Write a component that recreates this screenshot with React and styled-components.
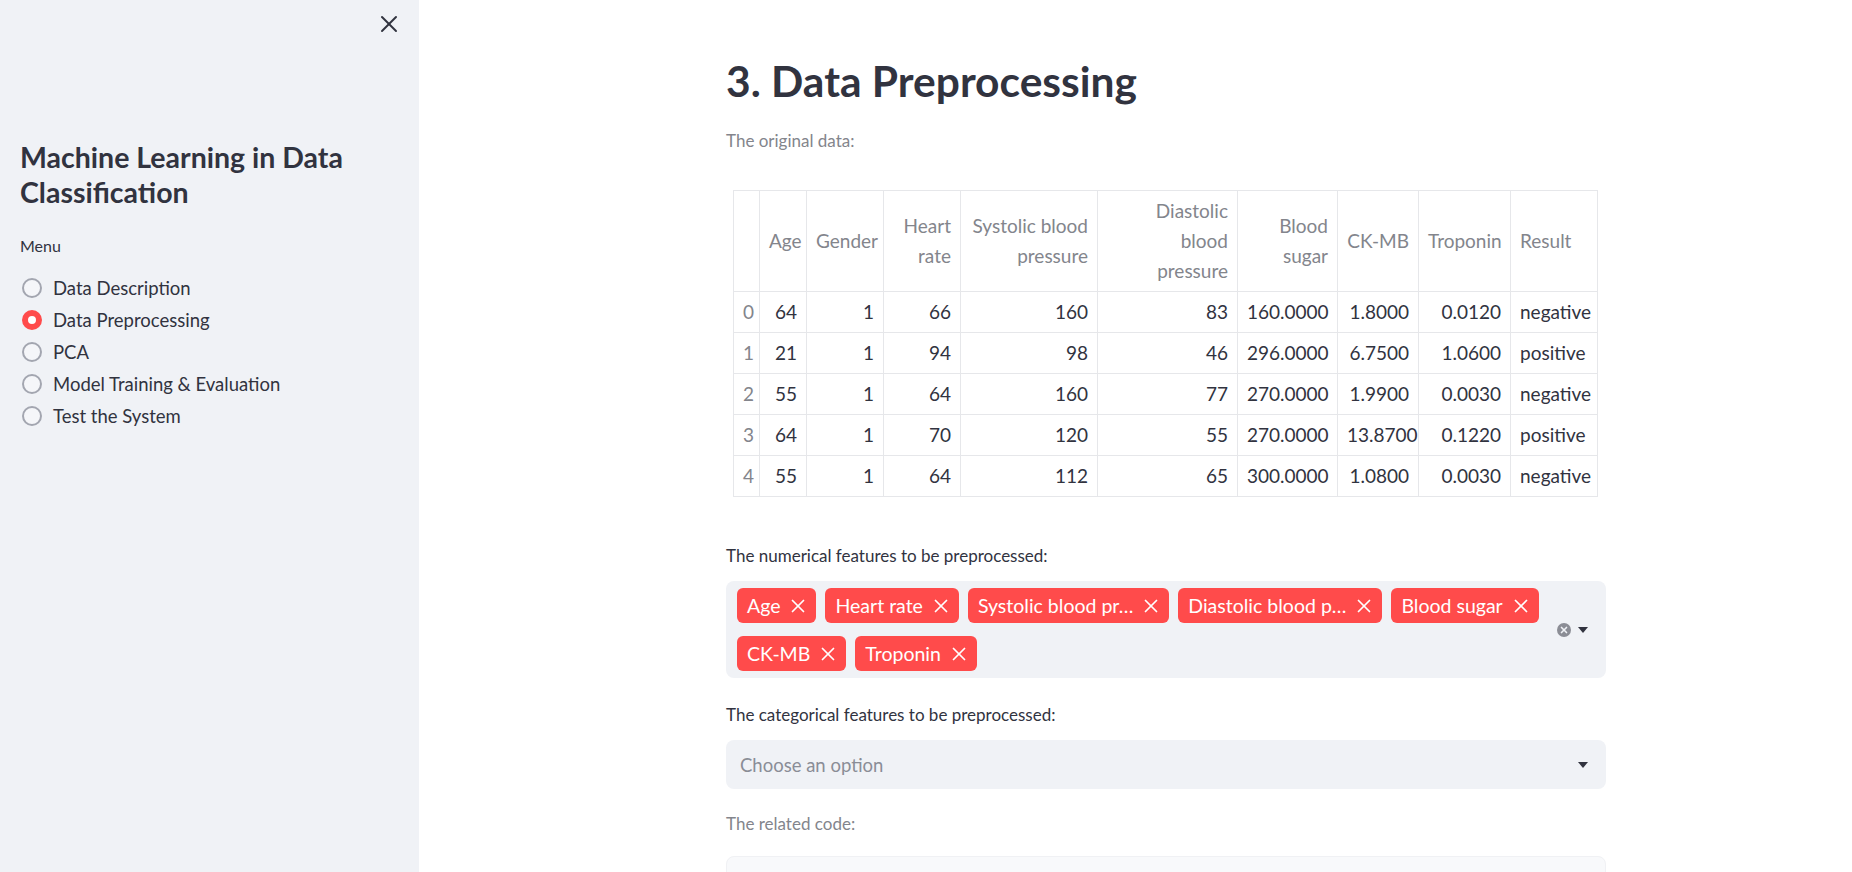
import React from "react";
import styled, { createGlobalStyle } from "styled-components";
import { X } from "lucide-react";

const GlobalStyle = createGlobalStyle`
  html, body {
    margin: 0;
    padding: 0;
    background: #ffffff;
  }
  body {
    font-family: "Lato", "Liberation Sans", sans-serif;
    color: #31333f;
  }
`;

const Page = styled.div`
  display: flex;
  height: 872px;
  overflow: hidden;
`;

const Sidebar = styled.aside`
  width: 419px;
  flex-shrink: 0;
  background: #f0f2f6;
  box-sizing: border-box;
  padding: 0 20px;
`;

const SidebarHeader = styled.div`
  display: flex;
  justify-content: flex-end;
  padding-top: 10px;
  margin-right: -4px;
  height: 130px;
  box-sizing: border-box;
  color: #31333f;
`;

const SidebarTitle = styled.h2`
  margin: 0;
  font-size: 28.5px;
  line-height: 35px;
  font-weight: 700;
  color: #31333f;
  padding-top: 10px;
`;

const MenuLabel = styled.div`
  margin-top: 24px;
  font-size: 16px;
  line-height: 24px;
  color: #31333f;
`;

const RadioList = styled.div`
  margin-top: 14px;
  display: flex;
  flex-direction: column;
`;

const RadioRow = styled.label`
  display: flex;
  align-items: center;
  gap: 11px;
  height: 32px;
  font-size: 18.5px;
  color: #31333f;
`;

const RadioDot = styled.span`
  width: 20px;
  height: 20px;
  border-radius: 50%;
  box-sizing: border-box;
  margin-left: 2px;
  flex-shrink: 0;
  background: ${(p) => (p.$on ? "#ffffff" : "#f5f6f9")};
  border: ${(p) => (p.$on ? "6.5px solid #ff4b4b" : "2.5px solid #a3a6b0")};
`;

const Main = styled.main`
  flex: 1;
  padding-left: 307px;
`;

const Content = styled.div`
  width: 880px;
  display: flex;
  flex-direction: column;
`;

const Title = styled.h1`
  margin: 56px 0 0;
  font-size: 42.5px;
  line-height: 50px;
  font-weight: 700;
  color: #31333f;
`;

const Caption = styled.p`
  margin: ${(p) => p.$top}px 0 0;
  font-size: 17px;
  line-height: 26px;
  color: #83858c;
`;

const Label = styled.div`
  margin-top: ${(p) => p.$top}px;
  font-size: 17px;
  line-height: 26px;
  color: #31333f;
`;

const Table = styled.table`
  margin: 36px 0 0 7px;
  border-collapse: collapse;
  table-layout: fixed;
  width: 864px;
  font-size: 19px;
  line-height: 30px;
  color: #31333f;
`;

const Th = styled.th`
  border: 1px solid #e6e7ea;
  padding: 5px 9px;
  font-weight: 400;
  color: #83858c;
  text-align: ${(p) => (p.$left ? "left" : "right")};
  vertical-align: middle;
  white-space: nowrap;
`;

const Td = styled.td`
  border: 1px solid #e6e7ea;
  padding: 5px 9px;
  text-align: ${(p) => (p.$left ? "left" : "right")};
  color: ${(p) => (p.$muted ? "#83858c" : "#31333f")};
  white-space: nowrap;
`;

const IndexTd = styled(Td)`
  text-align: left;
  padding: 5px 0 5px 9px;
`;

const InputBox = styled.div`
  margin-top: ${(p) => p.$top}px;
  background: #f0f2f6;
  border-radius: 8px;
  display: flex;
  align-items: center;
  min-height: ${(p) => p.$h}px;
  box-sizing: border-box;
  padding: 7px 18px 7px 11px;
`;

const Tags = styled.div`
  flex: 1;
  display: flex;
  flex-wrap: wrap;
  gap: 13px 9px;
  max-width: 815px;
`;

const Tag = styled.span`
  display: inline-flex;
  align-items: center;
  height: 35px;
  padding: 0 7px 0 10px;
  gap: 7px;
  border-radius: 6px;
  background: #ff4b4b;
  color: #ffffff;
  font-size: 19.5px;
  white-space: nowrap;
`;

const Placeholder = styled.span`
  flex: 1;
  font-size: 18.5px;
  color: #8a8d96;
  padding-left: 3px;
`;

const Controls = styled.div`
  display: flex;
  align-items: center;
  gap: 7px;
  margin-left: auto;
`;

const ClearDot = styled.span`
  width: 14px;
  height: 14px;
  border-radius: 50%;
  background: #8b8d95;
  display: inline-flex;
  align-items: center;
  justify-content: center;
`;

const CodeBox = styled.div`
  margin-top: 19px;
  height: 120px;
  background: #f8f9fb;
  border: 1px solid #f0f1f4;
  border-radius: 8px;
`;

const Caret = () => (
  <svg width="10" height="6" viewBox="0 0 10 6">
    <path d="M0 0h10L5 6z" fill="#31333f" />
  </svg>
);

const columns = [
  { key: "age", head: ["Age"], w: 47 },
  { key: "gender", head: ["Gender"], w: 77 },
  { key: "hr", head: ["Heart", "rate"], w: 77 },
  { key: "sys", head: ["Systolic blood", "pressure"], w: 137 },
  { key: "dia", head: ["Diastolic", "blood", "pressure"], w: 140 },
  { key: "sugar", head: ["Blood", "sugar"], w: 100 },
  { key: "ck", head: ["CK-MB"], w: 81 },
  { key: "trop", head: ["Troponin"], w: 92 },
  { key: "result", head: ["Result"], w: 87, left: true },
];

const rows = [
  ["64", "1", "66", "160", "83", "160.0000", "1.8000", "0.0120", "negative"],
  ["21", "1", "94", "98", "46", "296.0000", "6.7500", "1.0600", "positive"],
  ["55", "1", "64", "160", "77", "270.0000", "1.9900", "0.0030", "negative"],
  ["64", "1", "70", "120", "55", "270.0000", "13.8700", "0.1220", "positive"],
  ["55", "1", "64", "112", "65", "300.0000", "1.0800", "0.0030", "negative"],
];

const menu = [
  "Data Description",
  "Data Preprocessing",
  "PCA",
  "Model Training & Evaluation",
  "Test the System",
];

const numeric = [
  "Age",
  "Heart rate",
  "Systolic blood pr…",
  "Diastolic blood p…",
  "Blood sugar",
  "CK-MB",
  "Troponin",
];

export default function App() {
  return (
    <>
      <GlobalStyle />
      <Page>
        <Sidebar>
          <SidebarHeader>
            <X size={28} strokeWidth={1.7} />
          </SidebarHeader>
          <SidebarTitle>
            Machine Learning in Data
            <br />
            Classification
          </SidebarTitle>
          <MenuLabel>Menu</MenuLabel>
          <RadioList>
            {menu.map((m) => (
              <RadioRow key={m}>
                <RadioDot $on={m === "Data Preprocessing"} />
                {m}
              </RadioRow>
            ))}
          </RadioList>
        </Sidebar>

        <Main>
          <Content>
            <Title>3. Data Preprocessing</Title>
            <Caption $top={22}>The original data:</Caption>

            <Table>
              <colgroup>
                <col style={{ width: 26 }} />
                {columns.map((c) => (
                  <col key={c.key} style={{ width: c.w }} />
                ))}
              </colgroup>
              <thead>
                <tr>
                  <Th />
                  {columns.map((c) => (
                    <Th key={c.key} $left={c.left}>
                      {c.head.map((line, i) => (
                        <div key={i}>{line}</div>
                      ))}
                    </Th>
                  ))}
                </tr>
              </thead>
              <tbody>
                {rows.map((r, i) => (
                  <tr key={i}>
                    <IndexTd $muted>{i}</IndexTd>
                    {r.map((v, j) => (
                      <Td key={j} $left={columns[j].left}>
                        {v}
                      </Td>
                    ))}
                  </tr>
                ))}
              </tbody>
            </Table>

            <Label $top={46}>The numerical features to be preprocessed:</Label>
            <InputBox $top={12} $h={96}>
              <Tags>
                {numeric.map((t) => (
                  <Tag key={t}>
                    {t}
                    <X size={22} strokeWidth={1.9} />
                  </Tag>
                ))}
              </Tags>
              <Controls>
                <ClearDot>
                  <X size={10} strokeWidth={4} color="#f0f2f6" />
                </ClearDot>
                <Caret />
              </Controls>
            </InputBox>

            <Label $top={24}>The categorical features to be preprocessed:</Label>
            <InputBox $top={12} $h={49}>
              <Placeholder>Choose an option</Placeholder>
              <Controls>
                <Caret />
              </Controls>
            </InputBox>

            <Caption $top={22}>The related code:</Caption>
            <CodeBox />
          </Content>
        </Main>
      </Page>
    </>
  );
}
